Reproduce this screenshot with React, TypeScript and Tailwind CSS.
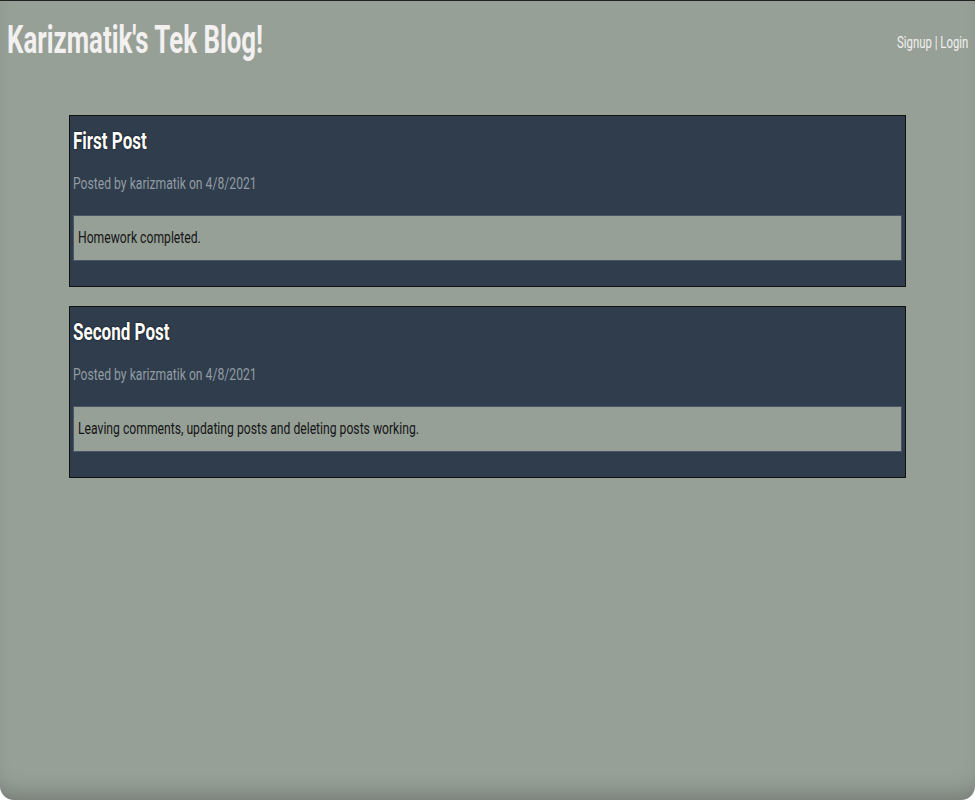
import React from 'react';

const posts = [
  { title: 'First Post', author: 'karizmatik', date: '4/8/2021', body: 'Homework completed.' },
  {
    title: 'Second Post',
    author: 'karizmatik',
    date: '4/8/2021',
    body: 'Leaving comments, updating posts and deleting posts working.',
  },
];

export default function App() {
  return (
    <div
      className="flex h-[800px] w-[975px] flex-col overflow-hidden rounded-b-[14px] border-t border-[#222] bg-[#96a097] shadow-[inset_0_-18px_22px_-14px_rgba(0,0,0,0.25)]"
      style={{ fontFamily: 'Roboto, "Liberation Sans", sans-serif' }}
    >
      <header className="flex items-start justify-between pl-[7px] pr-[7px] pt-[17px]">
        <h1 className="whitespace-nowrap text-[38px] font-bold leading-[44px] text-[#f3f0f0]">
          <span className="inline-block origin-left scale-x-[0.68]">Karizmatik's Tek Blog!</span>
        </h1>
        <nav className="whitespace-nowrap pt-[15px] text-[16px] leading-[20px] text-[#f3f0f0]">
          <span className="inline-block origin-right scale-x-[0.71]">
            <a>Signup</a> | <a>Login</a>
          </span>
        </nav>
      </header>
      <main className="mt-[53px] flex flex-col gap-[19px] px-[69px]">
        {posts.map((p) => (
          <article key={p.title} className="border border-[#111] bg-[#303d4d] pb-[25px] pl-[3px] pr-[3px] pt-[10px]">
            <h2 className="text-[24px] font-bold leading-[30px] text-white [text-shadow:0_0_2px_#000]">
              <span className="inline-block origin-left scale-x-[0.71]">{p.title}</span>
            </h2>
            <p className="mt-[18px] text-[16px] leading-[20px] text-[#919ca2]">
              <span className="inline-block origin-left scale-x-[0.76]">
                Posted by {p.author} on {p.date}
              </span>
            </p>
            <div className="mt-[21px] border border-[#4a5566] bg-[#96a097] px-[4px] py-[12px] text-[16px] leading-[20px] text-[#151515]">
              <span className="inline-block origin-left scale-x-[0.76]">{p.body}</span>
            </div>
          </article>
        ))}
      </main>
    </div>
  );
}
